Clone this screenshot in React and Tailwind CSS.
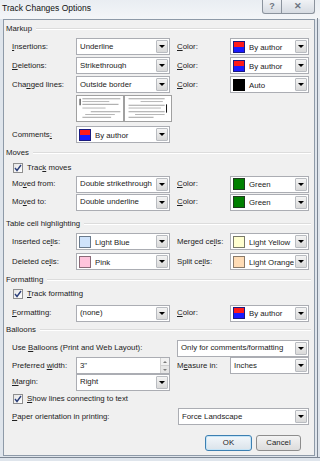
import React from 'react'

const U = ({ children }) => <span className="underline underline-offset-[1px]">{children}</span>

const Arrow = () => (
  <div className="m-[1px] flex h-[13px] w-[12px] shrink-0 items-center justify-center rounded-[1px] border border-[#b9bcc1] bg-gradient-to-b from-[#f4f4f4] to-[#d9d9d9]">
    <div className="h-0 w-0 border-x-[3px] border-t-[3px] border-x-transparent border-t-black" />
  </div>
)

const Combo = ({ w, children, swatch, sw }) => (
  <div className={`flex h-[17px] items-center whitespace-nowrap border border-[#abadb3] bg-white ${w}`}>
    {swatch ? (
      <div className="flex flex-1 items-center overflow-hidden">
        <div className={`ml-[2px] mr-[4px] h-[12px] w-[12px] shrink-0 border ${sw}`}>{swatch}</div>
        <span className="pt-[2px]">{children}</span>
      </div>
    ) : (
      <span className="flex-1 overflow-hidden pl-[3px]">{children}</span>
    )}
    <Arrow />
  </div>
)

const author = (
  <div className="flex h-full flex-col">
    <div className="flex-1 bg-[#ff1a1a]" />
    <div className="flex-1 bg-[#1a1aff]" />
  </div>
)

const Check = ({ children }) => (
  <div className="flex h-[14px] items-center pl-[9px]">
    <div className="mr-[4px] flex h-[10px] w-[10px] items-center justify-center border border-[#8f8f8f] bg-gradient-to-br from-[#e6e6e6] to-white">
      <svg width="8" height="8" viewBox="0 0 8 8">
        <path d="M1 4 L3 6.5 L7 1" fill="none" stroke="#2b3f7a" strokeWidth="1.4" />
      </svg>
    </div>
    <span>{children}</span>
  </div>
)

const Header = ({ children }) => (
  <div className="flex h-[12px] items-center pl-[2px] pr-[3px]">
    <span className="mr-[4px]">{children}</span>
    <div className="h-0 flex-1 border-t border-b border-t-[#dcdcdc] border-b-white" />
  </div>
)

const Row = ({ h, label, combo, label2, combo2 }) => (
  <div className={`flex items-center whitespace-nowrap pl-[8px] ${h}`}>
    <div className="w-[64px]">{label}</div>
    {combo}
    {label2 && <div className="ml-[7px] w-[53px]">{label2}</div>}
    {combo2}
  </div>
)

const Preview = ({ right }) => (
  <svg width="48" height="27" viewBox="0 0 48 27" className="border border-[#a0a0a0] bg-white">
    {right ? (
      <>
        <line x1="44" y1="9" x2="44" y2="18" stroke="#000" strokeWidth="1" />
        <line x1="3" y1="3" x2="42" y2="3" stroke="#9a9a9a" />
        <line x1="16" y1="6" x2="40" y2="6" stroke="#b0b0b0" />
        <line x1="3" y1="10" x2="42" y2="10" stroke="#9a9a9a" />
        <line x1="3" y1="13" x2="38" y2="13" stroke="#b0b0b0" />
        <line x1="3" y1="17" x2="42" y2="17" stroke="#9a9a9a" />
        <line x1="10" y1="20" x2="42" y2="20" stroke="#b0b0b0" />
        <line x1="3" y1="23" x2="30" y2="23" stroke="#9a9a9a" />
      </>
    ) : (
      <>
        <line x1="2.5" y1="3" x2="2.5" y2="10" stroke="#000" strokeWidth="1" />
        <line x1="5" y1="3" x2="46" y2="3" stroke="#9a9a9a" />
        <line x1="5" y1="6" x2="34" y2="6" stroke="#b0b0b0" />
        <line x1="5" y1="9" x2="44" y2="9" stroke="#9a9a9a" />
        <line x1="5" y1="13" x2="30" y2="13" stroke="#b0b0b0" />
        <line x1="14" y1="17" x2="46" y2="17" stroke="#9a9a9a" />
        <line x1="8" y1="20" x2="40" y2="20" stroke="#b0b0b0" />
        <line x1="5" y1="23" x2="36" y2="23" stroke="#9a9a9a" />
      </>
    )}
  </svg>
)

const Spin = () => (
  <div className="flex h-[17px] w-[94px] items-center border border-[#abadb3] bg-white">
    <span className="flex-1 pl-[3px]">3"</span>
    <div className="flex h-full w-[9px] flex-col border-l border-[#d0d0d0]">
      <div className="flex flex-1 items-center justify-center bg-[#f1f1f1]">
        <div className="h-0 w-0 border-x-[2px] border-b-[2px] border-x-transparent border-b-[#7a7a7a]" />
      </div>
      <div className="flex flex-1 items-center justify-center border-t border-[#d0d0d0] bg-[#e6e6e6]">
        <div className="h-0 w-0 border-x-[2px] border-t-[2px] border-x-transparent border-t-[#7a7a7a]" />
      </div>
    </div>
  </div>
)

export default function App() {
  return (
    <div className="relative h-[461px] w-[320px] overflow-hidden bg-[#dfe5ec] text-[7.8px] leading-none text-[#222] [font-family:'Liberation_Sans',Arial,sans-serif]">
      <div className="flex h-[19px] items-start bg-gradient-to-b from-[#e9edf2] to-[#f4f6f8]">
        <span className="pl-[2px] pt-[4px] text-[8.5px] text-[#111]">Track Changes Options</span>
        <div className="ml-auto mr-[5px] flex">
          <div className="flex h-[14px] w-[20px] items-center justify-center rounded-bl-[3px] border border-t-0 border-[#8b939d] bg-gradient-to-b from-[#f0f2f5] to-[#d6dbe2] text-[9px] font-bold text-[#6d7480]">
            ?
          </div>
          <div className="flex h-[14px] w-[33px] items-center justify-center rounded-br-[3px] border border-l-0 border-t-0 border-[#8b939d] bg-gradient-to-b from-[#f0f2f5] to-[#d6dbe2] text-[9px] font-bold text-[#6d7480]">
            ✕
          </div>
        </div>
      </div>

      <div className="ml-[3px] h-[437px] w-[312px] border border-[#8e9aa8] bg-[#f0f0f0]">
        <div className="pt-[3px]">
          <Header>Markup</Header>
          <Row
            h="h-[19px] mt-[2px]"
            label={<><U>I</U>nsertions:</>}
            combo={<Combo w="w-[94px]">Underline</Combo>}
            label2={<><U>C</U>olor:</>}
            combo2={<Combo w="w-[79px]" swatch={author} sw="border-[#1a1a80]">By author</Combo>}
          />
          <Row
            h="h-[19px]"
            label={<><U>D</U>eletions:</>}
            combo={<Combo w="w-[94px]">Strikethrough</Combo>}
            label2={<><U>C</U>olor:</>}
            combo2={<Combo w="w-[79px]" swatch={author} sw="border-[#1a1a80]">By author</Combo>}
          />
          <Row
            h="h-[19px]"
            label={<>Cha<U>n</U>ged lines:</>}
            combo={<Combo w="w-[94px]">Outside border</Combo>}
            label2={<><U>C</U>olor:</>}
            combo2={<Combo w="w-[79px]" swatch={<div className="h-full bg-black" />} sw="border-black">Auto</Combo>}
          />
          <div className="mt-[1px] flex pl-[72px]">
            <Preview />
            <Preview right />
          </div>
          <Row
            h="h-[17px] mt-[4px]"
            label={<>Comments<U>:</U></>}
            combo={<Combo w="w-[94px]" swatch={author} sw="border-[#1a1a80]">By author</Combo>}
          />

          <div className="mt-[4px]">
            <Header>Moves</Header>
          </div>
          <div className="mt-[2px]">
            <Check>Trac<U>k</U> moves</Check>
          </div>
          <Row
            h="h-[18px]"
            label={<>Mo<U>v</U>ed from:</>}
            combo={<Combo w="w-[94px]">Double strikethrough</Combo>}
            label2={<><U>C</U>olor:</>}
            combo2={<Combo w="w-[79px]" swatch={<div className="h-full bg-[#008000]" />} sw="border-[#1e3a1e]">Green</Combo>}
          />
          <Row
            h="h-[18px]"
            label={<>Mo<U>v</U>ed to:</>}
            combo={<Combo w="w-[94px]">Double underline</Combo>}
            label2={<><U>C</U>olor:</>}
            combo2={<Combo w="w-[79px]" swatch={<div className="h-full bg-[#008000]" />} sw="border-[#1e3a1e]">Green</Combo>}
          />

          <div className="mt-[7px]">
            <Header>Table cell highlighting</Header>
          </div>
          <Row
            h="h-[19px] mt-[2px]"
            label={<>Inserted ce<U>l</U>ls:</>}
            combo={<Combo w="w-[94px]" swatch={<div className="h-full bg-[#cfe3fb]" />} sw="border-[#6a7a8c]">Light Blue</Combo>}
            label2={<>Merged ce<U>l</U>ls:</>}
            combo2={<Combo w="w-[79px]" swatch={<div className="h-full bg-[#ffffd0]" />} sw="border-[#7a7a6a]">Light Yellow</Combo>}
          />
          <Row
            h="h-[19px] mt-[1px]"
            label={<>Deleted ce<U>l</U>ls:</>}
            combo={<Combo w="w-[94px]" swatch={<div className="h-full bg-[#ffc4dc]" />} sw="border-[#8a6a78]">Pink</Combo>}
            label2={<>Split ce<U>l</U>ls:</>}
            combo2={<Combo w="w-[79px]" swatch={<div className="h-full bg-[#ffdcb6]" />} sw="border-[#8a7a6a]">Light Orange</Combo>}
          />

          <div className="mt-[3px]">
            <Header>Formatting</Header>
          </div>
          <div className="mt-[1px]">
            <Check><U>T</U>rack formatting</Check>
          </div>
          <Row
            h="h-[18px] mt-[3px]"
            label={<><U>F</U>ormatting:</>}
            combo={<Combo w="w-[94px]">(none)</Combo>}
            label2={<><U>C</U>olor:</>}
            combo2={<Combo w="w-[79px]" swatch={author} sw="border-[#1a1a80]">By author</Combo>}
          />

          <div className="mt-[2px]">
            <Header>Balloons</Header>
          </div>
          <div className="mt-[3px] flex h-[18px] items-center whitespace-nowrap pl-[8px]">
            <div className="w-[165px]">Use <U>B</U>alloons (Print and Web Layout):</div>
            <Combo w="w-[132px]">Only for comments/formatting</Combo>
          </div>
          <Row
            h="h-[17px]"
            label={<>Preferred <U>w</U>idth:</>}
            combo={<Spin />}
            label2={<>M<U>e</U>asure in:</>}
            combo2={<Combo w="w-[79px]">Inches</Combo>}
          />
          <Row
            h="h-[16px]"
            label={<><U>M</U>argin:</>}
            combo={<Combo w="w-[94px]">Right</Combo>}
          />
          <div className="mt-[2px]">
            <Check><U>S</U>how lines connecting to text</Check>
          </div>
          <div className="mt-[2px] flex h-[17px] items-center whitespace-nowrap pl-[8px]">
            <div className="w-[166px]"><U>P</U>aper orientation in printing:</div>
            <Combo w="w-[131px]">Force Landscape</Combo>
          </div>

          <div className="mt-[10px] flex justify-end gap-[4px] pr-[13px]">
            <div className="flex h-[16px] w-[47px] items-center justify-center rounded-[3px] border border-[#3c7fb1] bg-gradient-to-b from-[#f2f7fb] to-[#dbe3ea] shadow-[inset_0_0_0_1px_#c5e4f7]">
              OK
            </div>
            <div className="flex h-[16px] w-[45px] items-center justify-center rounded-[3px] border border-[#8d8d8d] bg-gradient-to-b from-[#f3f3f3] to-[#dcdcdc]">
              Cancel
            </div>
          </div>
        </div>
      </div>
      <div className="absolute bottom-[3px] left-0 h-px w-full bg-[#7d8794]" />
      <div className="absolute right-[2px] top-[18px] h-[440px] w-px bg-[#7d8794]" />
    </div>
  )
}
